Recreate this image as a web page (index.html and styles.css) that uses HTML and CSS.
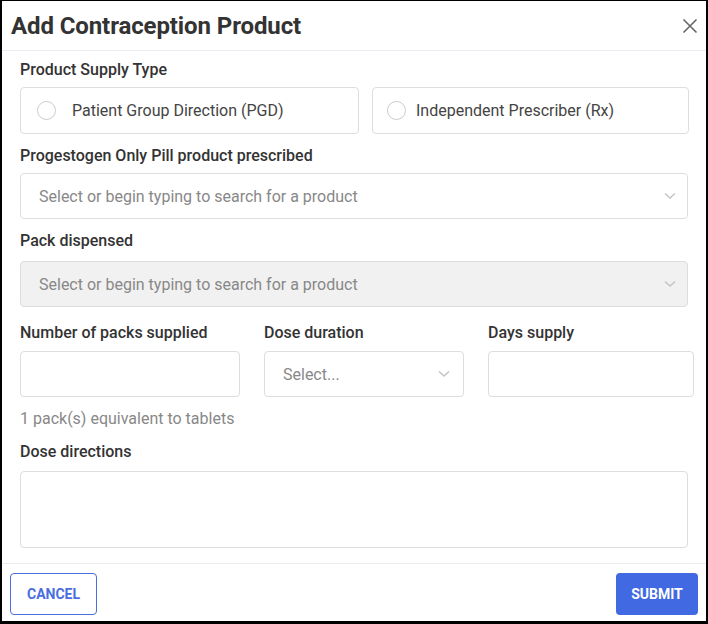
FILE: index.html
```html
<!DOCTYPE html>
<html>
<head>
<meta charset="utf-8">
<link rel="stylesheet" href="styles.css">
</head>
<body>
<div class="dialog">
  <div class="header">
    <h1 class="title">Add Contraception Product</h1>
    <button class="close" aria-label="Close">
      <svg width="16" height="16" viewBox="0 0 16 16"><path d="M1.5 1.5 L14.5 14.5 M14.5 1.5 L1.5 14.5" stroke="#666" stroke-width="1.6" fill="none"/></svg>
    </button>
  </div>
  <div class="content">
    <div class="label">Product Supply Type</div>
    <div class="radios">
      <label class="radio-box"><span class="circle"></span><span>Patient Group Direction (PGD)</span></label>
      <label class="radio-box second"><span class="circle"></span><span>Independent Prescriber (Rx)</span></label>
    </div>

    <div class="label">Progestogen Only Pill product prescribed</div>
    <div class="select">
      <span class="placeholder">Select or begin typing to search for a product</span>
      <svg class="chev" width="12" height="8" viewBox="0 0 12 8"><path d="M1 1.5 L6 6 L11 1.5" stroke="#c4c4c4" stroke-width="1.4" fill="none"/></svg>
    </div>

    <div class="label label-loose">Pack dispensed</div>
    <div class="select disabled">
      <span class="placeholder">Select or begin typing to search for a product</span>
      <svg class="chev" width="12" height="8" viewBox="0 0 12 8"><path d="M1 1.5 L6 6 L11 1.5" stroke="#c4c4c4" stroke-width="1.4" fill="none"/></svg>
    </div>

    <div class="triple">
      <div class="col">
        <div class="label label-mid">Number of packs supplied</div>
        <div class="input"></div>
      </div>
      <div class="col">
        <div class="label label-mid">Dose duration</div>
        <div class="select small">
          <span class="placeholder">Select...</span>
          <svg class="chev" width="12" height="8" viewBox="0 0 12 8"><path d="M1 1.5 L6 6 L11 1.5" stroke="#c4c4c4" stroke-width="1.4" fill="none"/></svg>
        </div>
      </div>
      <div class="col">
        <div class="label label-mid">Days supply</div>
        <div class="input"></div>
      </div>
    </div>
    <div class="hint">1 pack(s) equivalent to tablets</div>

    <div class="label label-text">Dose directions</div>
    <div class="textarea"></div>
  </div>
  <div class="footer">
    <button class="btn cancel">CANCEL</button>
    <button class="btn submit">SUBMIT</button>
  </div>
</div>
</body>
</html>
```

FILE: styles.css
```css
html, body {
  margin: 0;
  padding: 0;
  background: #000;
}
body {
  font-family: Roboto, "Noto Sans", sans-serif;
  color: #333;
}
.dialog {
  margin: 1px 0 0 2px;
  width: 704px;
  height: 620px;
  background: #fff;
  display: flex;
  flex-direction: column;
}
.header {
  height: 49px;
  border-bottom: 1px solid #e7edf2;
  display: flex;
  align-items: center;
  justify-content: space-between;
  padding: 0 8px 0 9px;
  flex: none;
}
.title {
  margin: 0;
  font-size: 24px;
  font-weight: 700;
  color: #333;
  letter-spacing: -0.1px;
}
.close {
  border: 0;
  background: none;
  padding: 0;
  width: 16px;
  height: 16px;
}
.content {
  padding: 9px 18px 0 18px;
  flex: 1;
}
.label {
  font-size: 16px;
  font-weight: 500;
  line-height: 20px;
  color: #333;
  margin-bottom: 7px;
}
.label-loose {
  margin-bottom: 10px;
}
.label-mid {
  margin-bottom: 8px;
}
.label-text {
  margin-bottom: 9px;
}
.radios {
  display: flex;
  gap: 13px;
  margin-bottom: 12px;
}
.radio-box {
  box-sizing: border-box;
  flex: none;
  height: 47px;
  width: 339px;
  border: 1px solid #ddd;
  border-radius: 4px;
  display: flex;
  align-items: center;
  padding-left: 16px;
  font-size: 16px;
  color: #444;
}
.radio-box.second {
  width: 317px;
  padding-left: 14px;
}
.circle {
  box-sizing: border-box;
  width: 19px;
  height: 19px;
  border-radius: 50%;
  border: 1px solid #ccc;
  margin-right: 16px;
}
.radio-box.second .circle {
  margin-right: 10px;
}
.select {
  box-sizing: border-box;
  height: 46px;
  border: 1px solid #ddd;
  border-radius: 4px;
  display: flex;
  align-items: center;
  justify-content: space-between;
  padding: 0 11px 0 18px;
  font-size: 16px;
  margin-bottom: 12px;
}
.select.disabled {
  background: #f1f1f1;
  margin-bottom: 16px;
}
.placeholder {
  color: #888;
}
.chev {
  display: block;
}
.triple {
  display: grid;
  grid-template-columns: 220px 200px 206px;
  column-gap: 24px;
}
.select.small {
  margin-bottom: 0;
  padding-left: 18px;
  padding-right: 13px;
}
.input {
  box-sizing: border-box;
  height: 46px;
  border: 1px solid #ddd;
  border-radius: 4px;
}
.hint {
  font-size: 16px;
  color: #888;
  margin-top: 12px;
  line-height: 20px;
  margin-bottom: 13px;
}
.textarea {
  box-sizing: border-box;
  height: 77px;
  border: 1px solid #ddd;
  border-radius: 4px;
}
.footer {
  border-top: 1px solid #ebebeb;
  height: 58px;
  flex: none;
  display: flex;
  justify-content: space-between;
  align-items: flex-start;
  padding: 9px 8px 0 8px;
  box-sizing: border-box;
}
.btn {
  font-family: Roboto, sans-serif;
  font-size: 14px;
  font-weight: 700;
  height: 42px;
  border-radius: 4px;
  cursor: pointer;
}
.cancel {
  width: 87px;
  background: #fff;
  color: #4a6ee0;
  border: 1px solid #4a6ee0;
}
.submit {
  width: 82px;
  background: #4169e1;
  color: #fff;
  border: 0;
}
```
